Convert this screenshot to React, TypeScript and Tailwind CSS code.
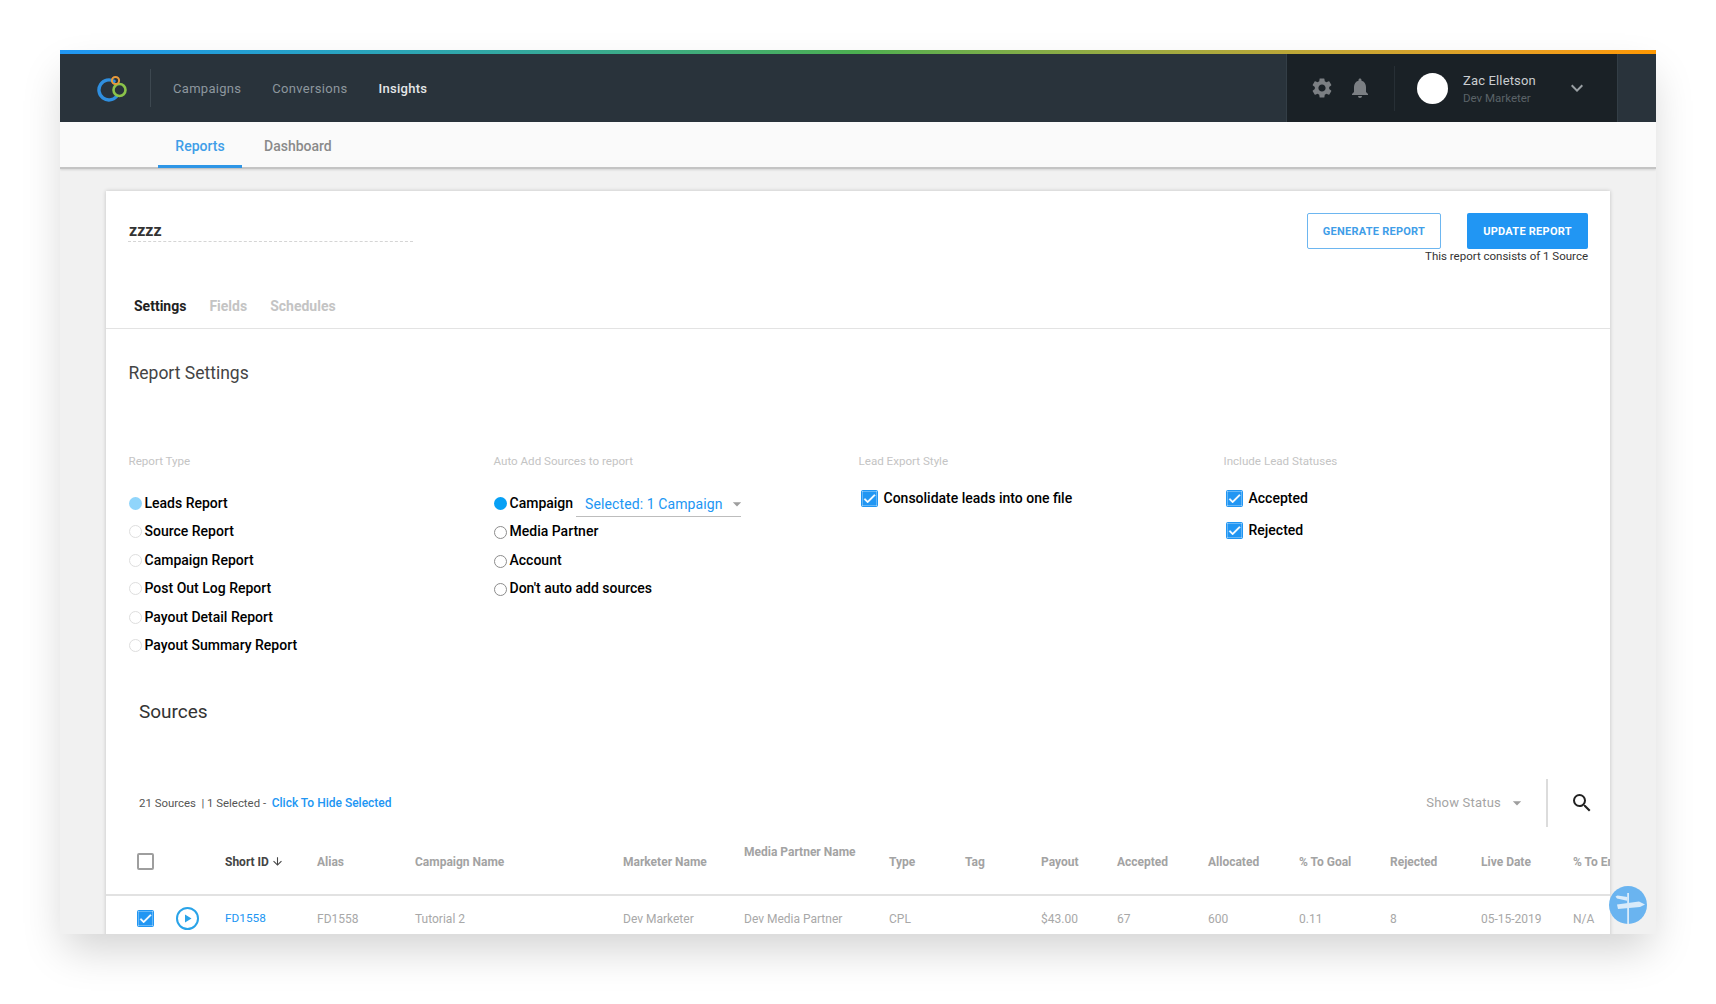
import { MdArrowDownward, MdArrowDropDown, MdCheck, MdKeyboardArrowDown, MdNotifications, MdSearch, MdSettings } from "react-icons/md";

const reportTypes = [
  "Leads Report",
  "Source Report",
  "Campaign Report",
  "Post Out Log Report",
  "Payout Detail Report",
  "Payout Summary Report",
];

const sourceOptions = ["Media Partner", "Account", "Don't auto add sources"];

const columns = "grid grid-cols-[39px_50px_91px_98px_208px_121px_145px_76px_76px_76px_91px_91px_91px_91px_92px_120px] items-center pl-[31px]";

const headers = [
  "Alias",
  "Campaign Name",
  "Marketer Name",
  "Media Partner Name",
  "Type",
  "Tag",
  "Payout",
  "Accepted",
  "Allocated",
  "% To Goal",
  "Rejected",
  "Live Date",
  "% To End",
];

const row = [
  "FD1558",
  "Tutorial 2",
  "Dev Marketer",
  "Dev Media Partner",
  "CPL",
  "",
  "$43.00",
  "67",
  "600",
  "0.11",
  "8",
  "05-15-2019",
  "N/A",
];

function Check() {
  return (
    <span className="flex h-[17px] w-[17px] items-center justify-center rounded-[2px] bg-[#2196f3] text-white">
      <MdCheck size={15} strokeWidth={1} />
    </span>
  );
}

function Logo() {
  return (
    <svg width="32" height="28" viewBox="0 0 32 28">
      <path d="M17 7.3 A10 10 0 1 0 19.5 22.5" fill="none" stroke="#2f8fdf" strokeWidth="3.4" strokeLinecap="round" />
      <circle cx="22.5" cy="16" r="6" fill="none" stroke="#8bc34a" strokeWidth="2.6" />
      <circle cx="18.5" cy="6.5" r="3.6" fill="none" stroke="#e69a3c" strokeWidth="2" />
    </svg>
  );
}

export default function App() {
  return (
    <div className="h-screen overflow-hidden bg-white pl-[60px] pt-[50px] font-['Roboto',sans-serif]">
      <div className="relative h-[884px] w-[1596px] overflow-hidden bg-[#f1f1f1] shadow-[0_20px_40px_-5px_rgba(0,0,0,0.18)]">
        <div className="h-1 bg-gradient-to-r from-[#2196f3] via-[#4caf50] to-[#ff9800]" />

        <nav className="flex h-[68px] items-stretch bg-[#29333b]">
          <div className="ml-[37px] flex w-[53px] items-center">
            <Logo />
          </div>
          <div className="my-[15px] w-px bg-[#3d4850]" />
          <div className="ml-[22px] flex items-center gap-[31px] pt-[2px] text-[13px] tracking-[0.3px] text-[#8d979e]">
            <span>Campaigns</span>
            <span>Conversions</span>
            <span className="font-medium text-[#e4e7e9]">Insights</span>
          </div>
          <div className="ml-auto mr-[38px] flex w-[332px] items-center border-x border-[#333e46] bg-[#1a2126]">
            <MdSettings size={24} className="ml-[23px] text-[#7b7f83]" />
            <MdNotifications size={24} className="ml-[14px] text-[#7b7f83]" />
            <div className="ml-[22px] h-[45px] w-px bg-[#272f35]" />
            <div className="ml-[22px] h-[31px] w-[31px] rounded-full bg-white" />
            <div className="ml-[15px] mt-[3px] flex flex-col gap-[1px]">
              <span className="text-[13px] leading-[16px] tracking-[0.15px] text-[#c9cdd0]">Zac Elletson</span>
              <span className="text-[11.5px] leading-[16px] text-[#5b6368]">Dev Marketer</span>
            </div>
            <MdKeyboardArrowDown size={24} className="ml-[29px] text-[#9aa0a4]" />
          </div>
        </nav>

        <div className="flex h-[47px] border-b-2 border-[#c4c4c4] bg-[#fafafa] pl-[98px] text-[14px] font-medium shadow-[0_1px_2px_rgba(0,0,0,0.12)]">
          <div className="h-[46px] w-[84px] border-b-[3px] border-[#2f96e6] pt-[14px] text-center leading-[20px] text-[#3f9ee8]">
            Reports
          </div>
          <div className="ml-[22px] pt-[14px] leading-[20px] text-[#8a8a8a]">Dashboard</div>
        </div>

        <div className="ml-[46px] mt-[22px] w-[1504px] overflow-hidden bg-white shadow-[0_0_4px_rgba(0,0,0,0.2)]">
          <div className="flex h-[100px] justify-between pl-[22px] pr-[22px] pt-[22px]">
            <div className="mt-[8px] h-[21px] w-[285px] border-b border-dashed border-[#d5d5d5] pl-[1px] text-[16px] font-bold leading-[20px] text-[#333]">
              zzzz
            </div>
            <div className="flex flex-col items-end">
              <div className="flex gap-[26px] text-[11px] font-bold tracking-[0.25px]">
                <button className="h-9 w-[134px] rounded-[2px] border border-[#6db6f0] pt-[2px] text-[#3f9ee8]">GENERATE REPORT</button>
                <button className="h-9 w-[121px] rounded-[2px] bg-[#2196f3] pt-[2px] text-white">UPDATE REPORT</button>
              </div>
              <p className="text-[11.5px] leading-[14px] text-[#333]">This report consists of 1 Source</p>
            </div>
          </div>

          <div className="flex h-[38px] gap-[23px] border-b border-[#e3e3e3] pb-[2px] pl-[28px] pt-[5px] text-[14px] font-bold leading-[20px] text-[#c4c4c4]">
            <span className="text-[#222]">Settings</span>
            <span>Fields</span>
            <span>Schedules</span>
          </div>

          <div className="pl-[22.5px] pt-[32px]">
            <h2 className="text-[17.5px] font-normal leading-[24px] text-[#444]">Report Settings</h2>
            <div className="mt-[68px] grid w-[1460px] grid-cols-4 text-[14px] font-medium text-black">
              <div>
                <p className="h-4 text-[11.6px] font-normal leading-4 text-[#c4c4c4]">Report Type</p>
                <div className="mt-[20px] flex flex-col">
                  {reportTypes.map((t, i) => (
                    <label key={t} className="flex h-[28.5px] items-center gap-[3px]">
                      <span className={i === 0 ? "h-[13px] w-[13px] rounded-full bg-[#90d5fb]" : "h-[13px] w-[13px] rounded-full border border-[#dedede]"} />
                      {t}
                    </label>
                  ))}
                </div>
              </div>
              <div>
                <p className="h-4 text-[11.6px] font-normal leading-4 text-[#c4c4c4]">Auto Add Sources to report</p>
                <div className="mt-[20px] flex flex-col">
                  <div className="flex h-[28.5px] items-center gap-[3px]">
                    <span className="h-[13px] w-[13px] rounded-full bg-[#06a0f5]" />
                    Campaign
                    <div className="flex h-[27px] w-[165px] items-center justify-between whitespace-nowrap border-b border-[#bdbdbd] pl-[9px] pt-[3px] text-[14px] font-normal tracking-[0.1px] text-[#2196f3]">
                      Selected: 1 Campaign
                      <MdArrowDropDown size={20} className="-mr-[6px] text-[#9e9e9e]" />
                    </div>
                  </div>
                  {sourceOptions.map((t) => (
                    <label key={t} className="flex h-[28.5px] items-center gap-[3px]">
                      <span className="h-[13px] w-[13px] translate-y-[1px] rounded-full border border-[#8c8c8c]" />
                      {t}
                    </label>
                  ))}
                </div>
              </div>
              <div>
                <p className="h-4 text-[11.6px] font-normal leading-4 text-[#c4c4c4]">Lead Export Style</p>
                <label className="ml-[2px] mt-[20px] flex h-[18px] items-center gap-[6px]">
                  <Check />
                  Consolidate leads into one file
                </label>
              </div>
              <div>
                <p className="h-4 text-[11.6px] font-normal leading-4 text-[#c4c4c4]">Include Lead Statuses</p>
                <div className="ml-[2px] mt-[20px] flex flex-col gap-[14.5px]">
                  <label className="flex h-[18px] items-center gap-[6px]">
                    <Check />
                    Accepted
                  </label>
                  <label className="flex h-[18px] items-center gap-[6px]">
                    <Check />
                    Rejected
                  </label>
                </div>
              </div>
            </div>
          </div>

          <h2 className="ml-[33px] mt-[39px] text-[19px] font-normal leading-[26px] text-[#333]">Sources</h2>

          <div className="ml-[33px] mr-[16px] mt-[54px] flex h-12 items-center justify-between text-[11.4px] text-[#555]">
            <p>
              21 Sources &nbsp;| 1 Selected -&nbsp;&nbsp;<span className="text-[12px] font-medium text-[#2196f3]">Click To Hide Selected</span>
            </p>
            <div className="flex h-12 items-center">
              <span className="text-[13px] tracking-[0.2px] text-[#a5a5a5]">Show Status</span>
              <MdArrowDropDown size={20} className="ml-[6px] text-[#9e9e9e]" />
              <div className="ml-[19px] h-12 w-[2px] bg-[#dcdcdc]" />
              <MdSearch size={24} className="ml-[22px] text-[#222]" />
            </div>
          </div>

          <div className={columns + " h-[69px] border-b-2 border-[#e2e2e2] pt-[2px] text-[12px] font-bold text-[#a3a3a3]"}>
            <span className="h-[17px] w-[17px] rounded-[2px] border-2 border-[#9e9e9e]" />
            <span />
            <span className="-ml-[1px] flex items-center gap-[2px] text-[#444]">
              Short ID
              <MdArrowDownward size={13} />
            </span>
            {headers.map((h) => (
              <span key={h} className={h === "Media Partner Name" ? "mb-[20px] whitespace-nowrap" : "whitespace-nowrap"}>
                {h}
              </span>
            ))}
          </div>

          <div className={columns + " h-[46px] text-[12px] text-[#a8a8a8]"}>
            <span className="mb-[2px]">
              <Check />
            </span>
            <span className="mb-[2px] flex h-[23px] w-[23px] items-center justify-center rounded-full border-2 border-[#29a3e8]">
              <svg width="8" height="9" viewBox="0 0 8 9">
                <path d="M1 0.5 L7.5 4.5 L1 8.5 Z" fill="#29a3e8" />
              </svg>
            </span>
            <span className="-ml-[1px] text-[11.8px] text-[#2196f3]">FD1558</span>
            {row.map((c, i) => (
              <span key={i}>{c}</span>
            ))}
          </div>
        </div>

        <div className="absolute left-[1549px] top-[836px] h-[38px] w-[38px] rounded-full bg-[#6ab4f0]">
          <svg width="38" height="38" viewBox="0 0 38 38">
            <path d="M18.2 7h1.8v31h-1.8z" fill="#d9ebfa" />
            <path d="M8.5 9.5 L18.5 11 L18 14.8 L8 12.5 L6.5 10.5 Z" fill="#d9ebfa" />
            <path d="M8 18.5 L30 15.5 L36 18.5 L31 21 L9 23 Z" fill="#d9ebfa" />
          </svg>
        </div>
      </div>
    </div>
  );
}
